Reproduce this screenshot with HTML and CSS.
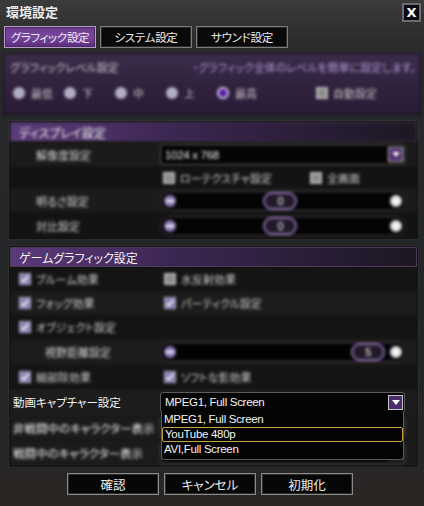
FILE: index.html
```html
<!DOCTYPE html>
<html lang="ja">
<head>
    <meta charset="UTF-8">
    <title>環境設定</title>
    <link rel="stylesheet" href="styles.css">
</head>
<body>
    <div class="window">
        <div class="titlebar">
            <span class="title">環境設定</span>
            <span class="close">X</span>
        </div>

        <div class="tabs">
            <div class="tab active">グラフィック設定</div>
            <div class="tab">システム設定</div>
            <div class="tab">サウンド設定</div>
        </div>

        <div class="level blur">
            <div class="level-head">
                <span>グラフィックレベル設定</span>
                <span class="hint">・グラフィック全体のレベルを簡単に設定します。</span>
            </div>
            <div class="radios">
                <span class="radio-item"><i class="radio"></i>最低</span>
                <span class="radio-item"><i class="radio"></i>下</span>
                <span class="radio-item"><i class="radio"></i>中</span>
                <span class="radio-item"><i class="radio"></i>上</span>
                <span class="radio-item"><i class="radio on"></i>最高</span>
                <span class="check-item auto"><i class="box"></i>自動設定</span>
            </div>
        </div>

        <div class="section display">
            <div class="section-head blur">ディスプレイ設定</div>
            <div class="row blur">
                <span class="label">解像度設定</span>
                <div class="select"><span>1024 x 768</span><i class="arrow"></i></div>
            </div>
            <div class="row short dark blur">
                <span></span>
                <div class="checks">
                    <span class="check-item"><i class="box"></i>ローテクスチャ設定</span>
                    <span class="check-item"><i class="box"></i>全画面</span>
                </div>
            </div>
            <div class="row blur">
                <span class="label">明るさ設定</span>
                <div class="slider"><i class="minus"></i><span class="knob" style="left: 42%">0</span><i class="plus"></i></div>
            </div>
            <div class="row dark blur">
                <span class="label">対比設定</span>
                <div class="slider"><i class="minus"></i><span class="knob" style="left: 42%">0</span><i class="plus"></i></div>
            </div>
        </div>

        <div class="section game">
            <div class="section-head">ゲームグラフィック設定</div>
            <div class="check-row blur">
                <span class="check-item"><i class="box on"></i>ブルーム効果</span>
                <span class="check-item"><i class="box"></i>水反射効果</span>
            </div>
            <div class="check-row band blur">
                <span class="check-item"><i class="box on"></i>フォッグ効果</span>
                <span class="check-item"><i class="box on"></i>パーティクル設定</span>
            </div>
            <div class="check-row blur">
                <span class="check-item"><i class="box on"></i>オブジェクト設定</span>
            </div>
            <div class="row tall band blur">
                <span class="label deep">視野距離設定</span>
                <div class="slider"><i class="minus"></i><span class="knob" style="left: 78%">5</span><i class="plus"></i></div>
            </div>
            <div class="check-row blur">
                <span class="check-item"><i class="box on"></i>細部除効果</span>
                <span class="check-item"><i class="box on"></i>ソフトな影効果</span>
            </div>
            <div class="row capture band">
                <span class="label flat">動画キャプチャー設定</span>
                <div class="select-wrap">
                    <div class="select"><span>MPEG1, Full Screen</span><i class="arrow"></i></div>
                    <ul class="options">
                        <li>MPEG1, Full Screen</li>
                        <li class="picked">YouTube 480p</li>
                        <li>AVI,Full Screen</li>
                    </ul>
                </div>
            </div>
            <div class="row blur">
                <span class="label flat">非戦闘中のキャラクター表示</span>
                <div class="select"><span></span><i class="arrow dim"></i></div>
            </div>
            <div class="row last blur">
                <span class="label flat">戦闘中のキャラクター表示</span>
                <div class="select"><span></span><i class="arrow dim"></i></div>
            </div>
        </div>

        <div class="buttons">
            <div class="btn">確認</div>
            <div class="btn">キャンセル</div>
            <div class="btn">初期化</div>
        </div>
    </div>
</body>
</html>
```

FILE: styles.css
```css
* {
    box-sizing: border-box;
}

body {
    margin: 0;
    background: #1d1d1d;
    font-family: "Noto Sans CJK JP", sans-serif;
    font-feature-settings: "palt";
    color: #ececec;
}

.window {
    width: 424px;
    height: 506px;
    display: flex;
    flex-direction: column;
    background: linear-gradient(#3b3b3b 0, #2c2c2c 40px, #262829 120px, #232627 380px, #2a2624 506px);
}

.blur {
    filter: blur(1.4px);
}

/* title + tabs */
.titlebar {
    height: 26px;
    display: flex;
    justify-content: space-between;
    align-items: flex-start;
    padding: 2px 3px 0 6px;
}

.title {
    font-size: 13px;
    font-weight: bold;
    line-height: 20px;
}

.close {
    width: 19px;
    height: 19px;
    margin-top: 1px;
    border: 2px solid #6e6e6e;
    background: #0d0818;
    color: #fff;
    font: bold 13px "DejaVu Sans", sans-serif;
    display: flex;
    align-items: center;
    justify-content: center;
}

.tabs {
    display: flex;
    gap: 4px;
    padding: 0 4px;
    height: 22px;
    margin-bottom: 5px;
}

.tab {
    width: 92px;
    border: 1px solid #7c7c7c;
    box-shadow: inset 0 0 0 1px #2a2a2a;
    background: #0a0a0a;
    font-size: 11.5px;
    letter-spacing: -0.3px;
    display: flex;
    align-items: center;
    justify-content: center;
}

.tab.active {
    border-color: #b89ccc;
    box-shadow: inset 0 0 0 1px #4a2a62;
    background: linear-gradient(#6c3c8e, #7a46a0 50%, #5a2c7c);
}

/* graphic level */
.level {
    margin: 0 3px;
    height: 62px;
    border: 1px solid #16101c;
    background: linear-gradient(#3a2b48, #2f203c 60%, #2a1b36);
    font-size: 11px;
    color: #c8c8c8;
}

.level-head {
    display: flex;
    justify-content: space-between;
    padding: 5px 4px 0 6px;
    height: 24px;
}

.hint {
    color: #b597d6;
}

.radios {
    display: flex;
    align-items: center;
    padding: 7px 0 0 9px;
}

.radio-item {
    width: 51px;
    display: flex;
    align-items: center;
    gap: 6px;
}

.radio {
    width: 12px;
    height: 12px;
    border-radius: 50%;
    background: #b4adc6;
}

.radio.on {
    background: #5a1ca8;
    border: 2px solid #d6cde6;
    box-shadow: 0 0 0 1px #3a2a50;
}

.check-item {
    display: flex;
    align-items: center;
    gap: 5px;
}

.auto {
    margin-left: 48px;
}

.box {
    width: 12px;
    height: 12px;
    background: #8c8c8c;
    border: 2px solid #b4b4b4;
}

.box.on {
    border: 1px solid #aea6cc;
    background: #8a82ad url("data:image/svg+xml,%3Csvg xmlns='http://www.w3.org/2000/svg' viewBox='0 0 12 12'%3E%3Cpath d='M2 6.5l2.5 2.5L10 2.5' fill='none' stroke='%23fff' stroke-width='2'/%3E%3C/svg%3E") center/10px no-repeat;
}

/* sections */
.section {
    margin: 5px 5px 0 8px;
    border: 1px solid #2e2e2e;
    background: #141414;
    padding: 1px;
}

.section-head {
    height: 20px;
    padding-left: 8px;
    font-size: 12px;
    line-height: 19px;
    color: #f4f4f4;
    border: 1px solid #4c3c5a;
    background: linear-gradient(90deg, #5b3a7a, #3c2652 40%, #1c1722 100%);
}

.row {
    display: grid;
    grid-template-columns: 150px 1fr;
    align-items: center;
    height: 25px;
    padding-right: 12px;
    font-size: 11px;
    background: #1b1b1b;
}

.row.dark {
    background: #131313;
}

.row.short {
    height: 21px;
}

.row.tall {
    height: 26px;
}

.label {
    padding-left: 26px;
    color: #d6d6d6;
}

.label.deep {
    padding-left: 35px;
}

.label.flat {
    padding-left: 3px;
    font-size: 11.5px;
    color: #f2f2f2;
}

.checks {
    display: flex;
    padding-left: 3px;
    color: #cfcfcf;
}

.checks .check-item:first-child {
    width: 147px;
}

.check-row {
    display: grid;
    grid-template-columns: 145px 1fr;
    align-items: center;
    height: 24px;
    padding-left: 9px;
    font-size: 11px;
    color: #cfcfcf;
}

.band {
    background: #1c1c1c;
}

/* select */
.select {
    height: 21px;
    border: 1px solid #5c5c5c;
    border-radius: 3px;
    background: #050505;
    display: flex;
    align-items: center;
    justify-content: space-between;
    padding: 0 1px 0 4px;
    font: 11.5px "Liberation Sans", sans-serif;
    letter-spacing: -0.3px;
    color: #f4f4f4;
}

.arrow {
    width: 15px;
    height: 15px;
    border: 1px solid #c8c8c8;
    background: #4d2c6c;
    position: relative;
}

.arrow::after {
    content: "";
    position: absolute;
    left: 3px;
    top: 4px;
    border-left: 4px solid transparent;
    border-right: 4px solid transparent;
    border-top: 5px solid #fff;
}

.arrow.dim {
    border-color: #333;
    background: #151515;
}

.select-wrap {
    position: relative;
}

.options {
    position: absolute;
    top: 20px;
    left: 1px;
    right: 1px;
    margin: 0;
    padding: 0 0 2px;
    list-style: none;
    background: #040404;
    border: 1px solid #5a5a5a;
    border-top: none;
    border-radius: 0 0 3px 3px;
    font: 11.5px "Liberation Sans", sans-serif;
    letter-spacing: -0.3px;
    color: #f4f4f4;
    z-index: 2;
}

.options li {
    height: 15px;
    line-height: 15px;
    padding-left: 2px;
}

.options li.picked {
    border: 1px solid #c9a246;
    border-radius: 2px;
    line-height: 13px;
}

.capture {
    height: 26px;
    position: relative;
    z-index: 2;
}

.row.last {
    height: 26px;
}

/* sliders */
.slider {
    position: relative;
    height: 20px;
    margin-right: -1px;
    border: 1px solid #3c3444;
    border-radius: 10px;
    background: #030303;
    box-shadow: inset 0 0 0 1px #111;
    display: flex;
    align-items: center;
    justify-content: space-between;
    padding: 0 3px;
}

.minus, .plus {
    width: 12px;
    height: 12px;
    border-radius: 50%;
    position: relative;
}

.minus {
    background: #8c78b4;
}

.plus {
    background: #d6d6d6;
}

.minus::after, .plus::after {
    content: "";
    position: absolute;
    left: 2px;
    right: 2px;
    top: 5px;
    height: 2px;
    background: #fff;
}

.plus::before {
    content: "";
    position: absolute;
    top: 2px;
    bottom: 2px;
    left: 5px;
    width: 2px;
    background: #fff;
}

.knob {
    position: absolute;
    top: 0;
    width: 34px;
    height: 18px;
    border: 2px solid #8a6ca8;
    border-radius: 9px;
    background: #201a28;
    font: 11px "Liberation Sans", sans-serif;
    color: #fff;
    display: flex;
    align-items: center;
    justify-content: center;
}

/* bottom */
.buttons {
    display: flex;
    justify-content: center;
    gap: 5px;
    margin-top: 5px;
    padding-right: 4px;
}

.btn {
    width: 92px;
    height: 22px;
    border: 1px solid #8a8a8a;
    box-shadow: inset 0 0 0 1px #2c2c2c;
    background: #060606;
    font-size: 12.5px;
    display: flex;
    align-items: center;
    justify-content: center;
}
```
